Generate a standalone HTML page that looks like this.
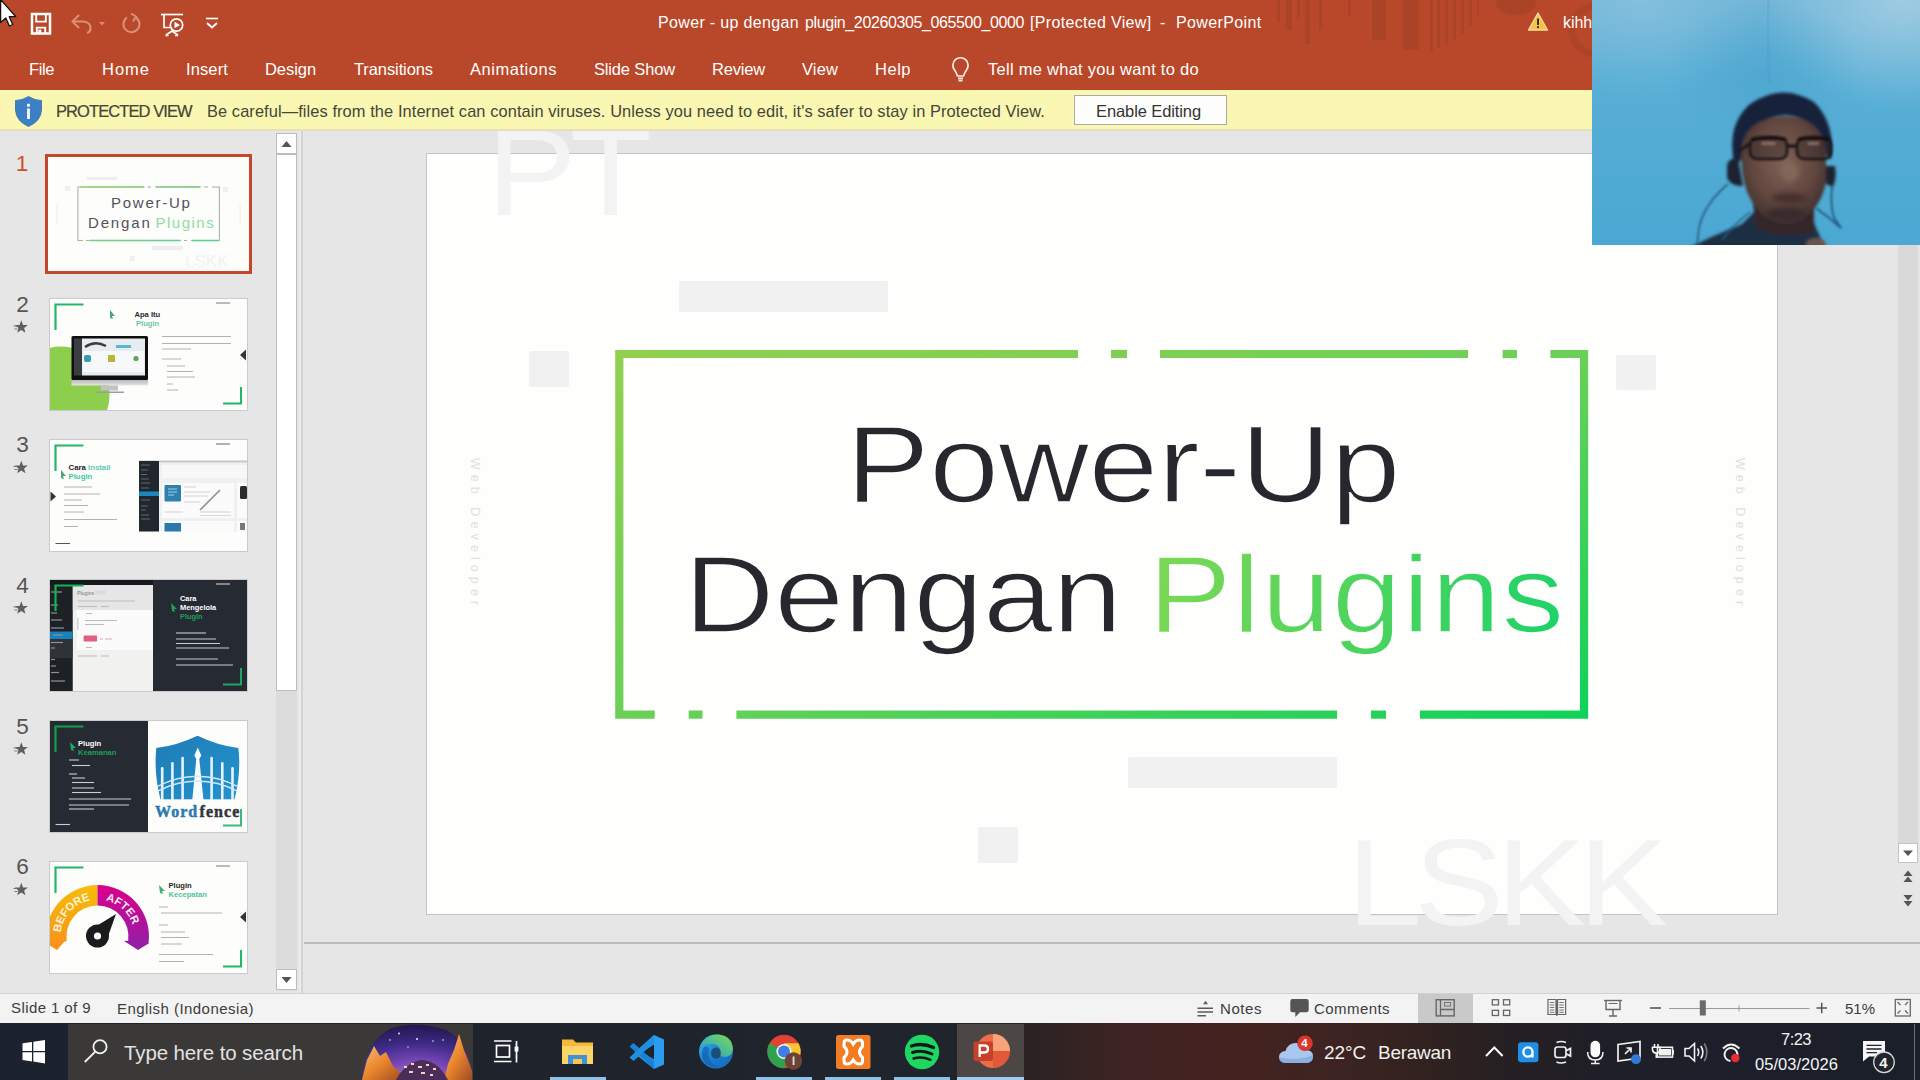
<!DOCTYPE html>
<html><head><meta charset="utf-8"><title>PowerPoint</title>
<style>
*{box-sizing:border-box;margin:0;padding:0}
html,body{width:1920px;height:1080px;overflow:hidden;background:#e6e6e6;font-family:"Liberation Sans",sans-serif;}
.abs{position:absolute}
.t{position:absolute;white-space:pre;line-height:1;}
#titlebar{left:0;top:0;width:1920px;height:90px;background:#b9482a}
#pv{left:0;top:90px;width:1920px;height:41px;background:#f9f7b2;border-bottom:2px solid #e3e2b4}
#left{left:0;top:131px;width:303px;height:862px;background:#e6e6e6}
#edit{left:303px;top:131px;width:1617px;height:862px;background:#e5e6e5}
#slide{left:427px;top:154px;width:1350px;height:760px;background:#fefefd;box-shadow:0 0 0 1px #c4c4c4}
#status{left:0;top:993px;width:1920px;height:30px;background:#f3f3f3;border-top:1px solid #d2d2d2}
#taskbar{left:0;top:1023px;width:1920px;height:57px;background:#1d1f26}
.thumb{position:absolute;left:50px;width:197px;height:111px;background:#fdfdfc;box-shadow:0 0 0 1px #cdcdcd;overflow:hidden}
</style></head><body>
<!-- ===== TITLE BAR ===== -->
<div id="titlebar" class="abs"></div>
<svg class="abs" style="left:0;top:0" width="1920" height="90" viewBox="0 0 1920 90">
<!-- decorative title pattern -->
<defs><filter id="tbb"><feGaussianBlur stdDeviation="0.7"/></filter></defs>
<g fill="#9f3f28" opacity="0.5" filter="url(#tbb)">
<rect x="1277" y="0" width="3" height="22"/><rect x="1286" y="0" width="6" height="30"/><rect x="1297" y="0" width="3" height="18"/>
<rect x="1305" y="0" width="5" height="44"/><rect x="1319" y="0" width="3" height="30"/><rect x="1348" y="0" width="3" height="16"/>
<rect x="1372" y="0" width="14" height="40"/><rect x="1403" y="0" width="16" height="50"/>
<rect x="1430" y="0" width="3" height="52"/><rect x="1437" y="0" width="3" height="48"/><rect x="1445" y="0" width="3" height="44"/><rect x="1453" y="0" width="3" height="40"/><rect x="1461" y="0" width="3" height="34"/><rect x="1469" y="0" width="3" height="26"/><rect x="1477" y="0" width="2" height="16"/>
<ellipse cx="1516" cy="4" rx="20" ry="11"/>
</g>
<circle cx="1596" cy="30" r="24" fill="none" stroke="#a5432a" stroke-width="7" opacity="0.6"/>
<!-- save -->
<g fill="none" stroke="#ffffff">
<path d="M32 13.9 H50 V33.5 H32 Z" stroke-width="2.5"/><path d="M36.2 14 V21.6 H45.8 V14" stroke-width="1.9"/><path d="M36.8 33.4 V27.6 H45.2 V33.4" stroke-width="1.9"/>
</g>
<rect x="38.3" y="29.6" width="3" height="3.8" fill="#fff"/>
<!-- undo (dim) -->
<g fill="none" stroke="#e7a892" stroke-width="2" opacity="0.75">
<path d="M79 15 L72.5 21.5 L79 28"/><path d="M73 21.5 H83 Q91 22 90.5 29 Q90 32 87 33"/>
</g>
<polygon points="99,22 105,22 102,25.5" fill="#e7a892" opacity="0.7"/>
<!-- redo (dim) -->
<g fill="none" stroke="#e7a892" stroke-width="2" opacity="0.75">
<path d="M127 17.5 A8 8 0 1 0 135 17"/><path d="M131 13.5 L136 16.5 L133 21.5"/>
</g>
<!-- present from start -->
<g fill="none" stroke="#ffffff" stroke-width="1.7">
<path d="M161 14.5 H183"/><path d="M164 15 V27.5 H170"/><circle cx="176.5" cy="25" r="6.2"/><path d="M166 35 L172 31 L178 35"/><path d="M165.5 35.5 h3 M175 35.5 h3"/>
</g>
<polygon points="174.5,21.8 174.5,28.2 180,25" fill="#fff"/>
<!-- customize dropdown -->
<path d="M206 18.5 H218" stroke="#fff" stroke-width="1.6"/><path d="M207 23 L212 27.5 L217 23" stroke="#fff" stroke-width="1.8" fill="none"/>
<!-- bulb -->
<g fill="none" stroke="#fdeee8" stroke-width="1.7">
<path d="M957.5 76 Q956.5 72.5 954.5 70 A7.6 7.6 0 1 1 966.5 70 Q964.5 72.5 963.5 76 Z"/><path d="M958 78.3 H963 M958.5 80.6 H962.5"/>
</g>
<!-- warning -->
<polygon points="1538,13 1547.5,30 1528.5,30" fill="#f6c24b" stroke="#f9dc9a" stroke-width="1.3" stroke-linejoin="round"/>
<rect x="1537.1" y="18.5" width="1.9" height="6.5" fill="#3a2a12"/><rect x="1537.1" y="26.2" width="1.9" height="2" fill="#3a2a12"/>
</svg>

<span class="t" style="left:658.0px;top:14.5px;font-size:16px;color:#fff;letter-spacing:0.34px;">Power - up dengan</span>
<span class="t" style="left:805.0px;top:14.5px;font-size:16px;color:#fff;letter-spacing:-0.39px;">plugin_20260305_065500_0000</span>
<span class="t" style="left:1030.0px;top:14.5px;font-size:16px;color:#fff;letter-spacing:0.33px;">[Protected View]</span>
<span class="t" style="left:1160.0px;top:14.5px;font-size:16px;color:#fff;letter-spacing:0.67px;">-</span>
<span class="t" style="left:1176.0px;top:14.5px;font-size:16px;color:#fff;letter-spacing:0.37px;">PowerPoint</span>
<span class="t" style="left:1563.0px;top:14.5px;font-size:16px;color:#fff;letter-spacing:-0.05px;">kihhh</span>
<span class="t" style="left:29.0px;top:60.8px;font-size:16.5px;color:#fff;letter-spacing:-0.40px;">File</span>
<span class="t" style="left:102.0px;top:60.8px;font-size:16.5px;color:#fff;letter-spacing:1.00px;">Home</span>
<span class="t" style="left:186.0px;top:60.8px;font-size:16.5px;color:#fff;letter-spacing:0.12px;">Insert</span>
<span class="t" style="left:265.0px;top:60.8px;font-size:16.5px;color:#fff;letter-spacing:-0.06px;">Design</span>
<span class="t" style="left:354.0px;top:60.8px;font-size:16.5px;color:#fff;letter-spacing:-0.10px;">Transitions</span>
<span class="t" style="left:470.0px;top:60.8px;font-size:16.5px;color:#fff;letter-spacing:0.54px;">Animations</span>
<span class="t" style="left:594.0px;top:60.8px;font-size:16.5px;color:#fff;letter-spacing:-0.16px;">Slide Show</span>
<span class="t" style="left:712.0px;top:60.8px;font-size:16.5px;color:#fff;letter-spacing:-0.18px;">Review</span>
<span class="t" style="left:802.0px;top:60.8px;font-size:16.5px;color:#fff;letter-spacing:0.13px;">View</span>
<span class="t" style="left:875.0px;top:60.8px;font-size:16.5px;color:#fff;letter-spacing:0.52px;">Help</span>
<span class="t" style="left:988.0px;top:60.8px;font-size:16.5px;color:#fff;letter-spacing:0.27px;">Tell me what you want to do</span>
<!-- ===== EDIT AREA ===== -->
<div id="edit" class="abs"></div>
<div id="slide" class="abs"></div>
<!-- placeholder grey blocks -->
<div class="abs" style="left:679px;top:281px;width:209px;height:31px;background:#f1f1f2;border-radius:2px"></div>
<div class="abs" style="left:529px;top:351px;width:40px;height:36px;background:#f1f1f2;border-radius:2px"></div>
<div class="abs" style="left:1616px;top:355px;width:40px;height:35px;background:#f1f1f2;border-radius:2px"></div>
<div class="abs" style="left:1128px;top:757px;width:209px;height:31px;background:#f1f1f2;border-radius:2px"></div>
<div class="abs" style="left:978px;top:827px;width:40px;height:36px;background:#f1f1f2;border-radius:2px"></div>
<!-- green frame -->
<svg class="abs" style="left:605px;top:339px" width="1000" height="400" viewBox="605 339 1000 400">
<defs><linearGradient id="fg" gradientUnits="userSpaceOnUse" x1="0" y1="0" x2="1" y2="1" gradientTransform="translate(615 350) scale(973 369)">
<stop offset="0" stop-color="#92d050"/><stop offset="0.5" stop-color="#6bd058"/><stop offset="1" stop-color="#0fd25a"/></linearGradient></defs>
<g fill="none" stroke="url(#fg)" stroke-width="8.2">
<path d="M1078 354 H619.3 V714.6 H654.7"/>
<path d="M1111 354 H1127"/>
<path d="M1160 354 H1468"/>
<path d="M1502.6 354 H1517"/>
<path d="M1550.4 354 H1584.1 V714.6 H1420"/>
<path d="M1371 714.6 H1386"/>
<path d="M736.4 714.6 H1337"/>
<path d="M688.7 714.6 H702.5"/>
</g></svg>
<!-- right scrollbar + notes separator -->
<div class="abs" style="left:1898px;top:131px;width:20px;height:712px;background:#d9d9d9"></div>
<div class="abs" style="left:1898px;top:843px;width:20px;height:20px;background:#fefefe;border:1px solid #c3c3c3"></div>
<svg class="abs" style="left:1896px;top:840px" width="24" height="72" viewBox="1896 840 24 72" fill="#555">
<polygon points="1903,850.5 1913,850.5 1908,856"/>
<polygon points="1903.5,876 1912.5,876 1908,870.5"/><polygon points="1903.5,882 1912.5,882 1908,876.5"/>
<polygon points="1903.5,895 1912.5,895 1908,900.5"/><polygon points="1903.5,901 1912.5,901 1908,906.5"/>
</svg>
<div class="abs" style="left:304px;top:942px;width:1616px;height:1.5px;background:#bcbcbc"></div>
<span class="t" style="left:481px;top:458px;font-size:12.5px;color:#e0e0e0;letter-spacing:5.1px;transform:rotate(90deg);transform-origin:0 0">Web Developer</span>
<span class="t" style="left:1746px;top:458px;font-size:12.5px;color:#e0e0e0;letter-spacing:5.1px;transform:rotate(90deg);transform-origin:0 0">Web Developer</span>
<svg class="abs" style="left:1148px;top:520px;overflow:visible" width="440" height="170" viewBox="0 0 440 170">
<defs><linearGradient id="pg" gradientUnits="userSpaceOnUse" x1="0" y1="40" x2="360" y2="110"><stop offset="0" stop-color="#7ed857"/><stop offset="0.5" stop-color="#50d45d"/><stop offset="1" stop-color="#1fd268"/></linearGradient></defs>
<text x="0" y="111.7" transform="scale(1.14 1)" font-family="Liberation Sans" font-size="110" letter-spacing="0.72" fill="url(#pg)" stroke="#fefefd" stroke-width="1.7">Plugins</text>
</svg>

<span class="t" style="left:487.0px;top:111.5px;font-size:122px;color:#f3f3f3;letter-spacing:-6.13px;transform:scaleX(1.1);transform-origin:0 50%;">PT</span>
<span class="t" style="left:1347.0px;top:822.3px;font-size:122px;color:#f3f3f3;letter-spacing:-6.63px;transform:scaleX(1.1);transform-origin:0 50%;">LSKK</span>
<span class="t" style="left:846.0px;top:408.6px;font-size:110px;color:#26282e;letter-spacing:-0.39px;transform:scaleX(1.14);transform-origin:0 50%;-webkit-text-stroke:1.7px #fefefd;">Power-Up</span>
<span class="t" style="left:684.0px;top:538.6px;font-size:110px;color:#26282e;letter-spacing:-0.19px;transform:scaleX(1.14);transform-origin:0 50%;-webkit-text-stroke:1.7px #fefefd;">Dengan</span>
<!-- ===== PROTECTED VIEW ===== -->
<div id="pv" class="abs"></div>
<div class="abs" style="left:1074px;top:95px;width:153px;height:30px;background:#fdfdfb;border:1px solid #ababab"></div>
<svg class="abs" style="left:10px;top:92px" width="40" height="38" viewBox="10 92 40 38">
<path d="M28.5 96.5 Q22 100.5 15.5 100.5 V110 Q16 121 28.5 126.5 Q41 121 41.5 110 V100.5 Q35 100.5 28.5 96.5 Z" fill="#3c7fc6" stroke="#2f6cb0" stroke-width="0.8"/>
<rect x="27.1" y="108.5" width="2.8" height="10.5" fill="#fff"/><rect x="27.1" y="103.8" width="2.8" height="2.9" fill="#fff"/>
</svg>

<span class="t" style="left:56.0px;top:102.8px;font-size:16.5px;color:#454538;letter-spacing:-0.91px;-webkit-text-stroke:0.22px #454538;">PROTECTED VIEW</span>
<span class="t" style="left:207.0px;top:102.8px;font-size:16.4px;color:#45453a;letter-spacing:0.09px;">Be careful—files from the Internet can contain viruses. Unless you need to edit, it's safer to stay in Protected View.</span>
<span class="t" style="left:1096.0px;top:102.8px;font-size:16.5px;color:#333;letter-spacing:-0.10px;">Enable Editing</span>
<!-- ===== LEFT PANEL ===== -->
<div id="left" class="abs"></div>
<div class="abs" style="left:276px;top:133px;width:21px;height:858px;background:#dcdcdc"></div>
<div class="abs" style="left:276px;top:154px;width:21px;height:537px;background:#fefefe;border:1px solid #bdbdbd"></div>
<div class="abs" style="left:276px;top:133px;width:21px;height:21px;background:#fefefe;border:1px solid #bdbdbd"></div>
<div class="abs" style="left:276px;top:969px;width:21px;height:21px;background:#fefefe;border:1px solid #bdbdbd"></div>
<svg class="abs" style="left:276px;top:133px" width="21" height="858"><polygon points="5.5,14 15.5,14 10.5,8" fill="#555"/><polygon points="5.5,844 15.5,844 10.5,850" fill="#555"/></svg>
<div class="abs" style="left:301px;top:131px;width:2px;height:862px;background:#d3d3d3"></div>
<div class="abs" style="left:299px;top:131px;width:2px;height:862px;background:#ececec"></div>
<span class="t" style="left:10px;top:153.4px;width:24px;text-align:center;font-size:22.6px;color:#cf4f2c">1</span>
<span class="t" style="left:10.5px;top:293.7px;width:24px;text-align:center;font-size:22.6px;color:#555555">2</span>
<span class="t" style="left:10.5px;top:434.2px;width:24px;text-align:center;font-size:22.6px;color:#555555">3</span>
<span class="t" style="left:10.5px;top:574.7px;width:24px;text-align:center;font-size:22.6px;color:#555555">4</span>
<span class="t" style="left:10.5px;top:715.7px;width:24px;text-align:center;font-size:22.6px;color:#555555">5</span>
<span class="t" style="left:10.5px;top:856.2px;width:24px;text-align:center;font-size:22.6px;color:#555555">6</span>
<svg class="abs" style="left:0;top:131px" width="50" height="862" viewBox="0 131 50 862"><polygon points="21.3,320.3 23.0,324.9 27.9,325.1 24.1,328.1 25.4,332.8 21.3,330.1 17.2,332.8 18.5,328.1 14.7,325.1 19.6,324.9" fill="#5f5f5f"/><path d="M17.0 326.0 h-3.5 M17.5 329.0 h-3" stroke="#777" stroke-width="1.1"/><polygon points="21.3,460.8 23.0,465.4 27.9,465.6 24.1,468.6 25.4,473.3 21.3,470.6 17.2,473.3 18.5,468.6 14.7,465.6 19.6,465.4" fill="#5f5f5f"/><path d="M17.0 466.5 h-3.5 M17.5 469.5 h-3" stroke="#777" stroke-width="1.1"/><polygon points="21.3,601.3 23.0,605.9 27.9,606.1 24.1,609.1 25.4,613.8 21.3,611.1 17.2,613.8 18.5,609.1 14.7,606.1 19.6,605.9" fill="#5f5f5f"/><path d="M17.0 607.0 h-3.5 M17.5 610.0 h-3" stroke="#777" stroke-width="1.1"/><polygon points="21.3,742.3 23.0,746.9 27.9,747.1 24.1,750.1 25.4,754.8 21.3,752.1 17.2,754.8 18.5,750.1 14.7,747.1 19.6,746.9" fill="#5f5f5f"/><path d="M17.0 748.0 h-3.5 M17.5 751.0 h-3" stroke="#777" stroke-width="1.1"/><polygon points="21.3,882.8 23.0,887.4 27.9,887.6 24.1,890.6 25.4,895.3 21.3,892.6 17.2,895.3 18.5,890.6 14.7,887.6 19.6,887.4" fill="#5f5f5f"/><path d="M17.0 888.5 h-3.5 M17.5 891.5 h-3" stroke="#777" stroke-width="1.1"/></svg>
<div class="abs" style="left:45px;top:153.5px;width:207px;height:120.5px;border:3.5px solid #c3482b;background:#fdfdfc"></div>
<svg class="abs" style="left:50px;top:158px;background:#fdfdfc;" width="197" height="111" viewBox="0 0 197 111" font-family="Liberation Sans"><defs><linearGradient id="g1" x1="0" x2="1" y1="0" y2="1"><stop offset="0" stop-color="#9ed27a"/><stop offset="1" stop-color="#55d28e"/></linearGradient></defs><rect x="27.9" y="29" width="141.5" height="53.5" fill="none" stroke="#a9b7a6" stroke-width="1.1"/><path d="M30 29 H94 M106 29 H150 M40 82.5 H130 M142 82.5 H168" stroke="url(#g1)" stroke-width="1.4"/><path d="M94.5 29 h3 M101 29 h4 M151 29 h3 M158 29 h4 M33 82.5 h3 M131 82.5 h3 M137 82.5 h4" stroke="#fdfdfc" stroke-width="2"/><text x="61" y="49.8" font-family="Liberation Sans" font-size="15" font-weight="400" fill="#50525a" letter-spacing="1.75" >Power-Up</text><text x="38" y="69.8" font-family="Liberation Sans" font-size="15" font-weight="400" fill="#50525a" letter-spacing="1.85" >Dengan</text><text x="105.5" y="69.8" font-family="Liberation Sans" font-size="15" font-weight="400" fill="#8fdc9c" letter-spacing="1.5" >Plugins</text><rect x="37" y="19" width="30" height="3" fill="#eeeeee"/><rect x="102" y="88" width="31" height="4" fill="#eeeeee"/><rect x="15" y="28" width="5" height="5" fill="#f0f0f0"/><rect x="173" y="29" width="5" height="5" fill="#f0f0f0"/><rect x="80" y="98" width="5" height="5" fill="#f0f0f0"/><path d="M7 45 V66 M190 45 V66" stroke="#eeeeee" stroke-width="1"/><text x="135" y="109" font-family="Liberation Sans" font-size="17" font-weight="400" fill="#f2f2f2" letter-spacing="0" >LSKK</text></svg>
<svg class="abs" style="left:50px;top:299px;background:#fdfdfc;box-shadow:0 0 0 1px #cbcbcb;" width="197" height="111" viewBox="0 0 197 111" font-family="Liberation Sans"><circle cx="11" cy="96" r="48.5" fill="#8dcf4c"/><path d="M5.5 31 V5.5 H33.5" fill="none" stroke="#22b868" stroke-width="2.2"/><path d="M173 104.5 H191 V88" fill="none" stroke="#22b868" stroke-width="2"/><rect x="21.5" y="37" width="76.5" height="44" rx="1.5" fill="#0f0f10"/><rect x="24" y="39.5" width="8" height="37" fill="#3a3d42"/><rect x="32" y="39.5" width="63" height="37" fill="#e6ecef"/><rect x="33" y="52" width="61" height="21" fill="#f6f8f9"/><path d="M35 48 Q45 41 56 47" stroke="#3c3c3c" stroke-width="2.4" fill="none"/><rect x="66" y="46" width="15" height="3" fill="#5fb4d0"/><rect x="34" y="56" width="7" height="7" rx="2" fill="#3a9bb7"/><rect x="58" y="56" width="7" height="7" fill="#b9b53a"/><circle cx="86" cy="59.5" r="2.6" fill="#5ea35a"/><defs><linearGradient id="st" x1="0" x2="0" y1="0" y2="1"><stop offset="0" stop-color="#b9b9b9"/><stop offset="1" stop-color="#e4e4e4"/></linearGradient></defs><rect x="21.5" y="81" width="76.5" height="5.5" fill="url(#st)"/><rect x="51" y="86.5" width="17" height="5" fill="#c2c2c2"/><rect x="46" y="92.5" width="28" height="1.5" fill="#9c9c9c"/><text x="84.5" y="17.5" font-family="Liberation Sans" font-size="7.6" font-weight="700" fill="#2a2a33" letter-spacing="0" >Apa Itu</text><text x="86" y="26.5" font-family="Liberation Sans" font-size="7.6" font-weight="700" fill="#6cc9a0" letter-spacing="0" >Plugin</text><path d="M60 11 l5 6 l-3 0 l1 3 l-3 -1 z" fill="#4aa57a"/><path d="M112 37.5 H181" stroke="#b2b2b2" stroke-width="1" opacity="1"/><path d="M112 44.5 H181" stroke="#b2b2b2" stroke-width="1" opacity="1"/><path d="M112 50 H141" stroke="#b2b2b2" stroke-width="1" opacity="1"/><path d="M112 60 H131" stroke="#b2b2b2" stroke-width="1" opacity="1"/><path d="M117 67 H135" stroke="#b2b2b2" stroke-width="1" opacity="1"/><path d="M117 72.5 H143" stroke="#b2b2b2" stroke-width="1" opacity="1"/><path d="M117 78 H145" stroke="#b2b2b2" stroke-width="1" opacity="1"/><path d="M117 85 H123" stroke="#b2b2b2" stroke-width="1" opacity="1"/><path d="M117 91 H128" stroke="#b2b2b2" stroke-width="1" opacity="1"/><polygon points="190,56 196,50.5 196,61.5" fill="#333"/><path d="M166 4 H180" stroke="#777" stroke-width="1" opacity="1"/></svg>
<svg class="abs" style="left:50px;top:439.5px;background:#fdfdfc;box-shadow:0 0 0 1px #cbcbcb;" width="197" height="111" viewBox="0 0 197 111" font-family="Liberation Sans"><path d="M5.5 31 V5.5 H33.5" fill="none" stroke="#22b868" stroke-width="2.2"/><text x="18.5" y="29.5" font-family="Liberation Sans" font-size="7.8" font-weight="700" fill="#1e2027" letter-spacing="0" >Cara</text><text x="38" y="29.5" font-family="Liberation Sans" font-size="7.8" font-weight="700" fill="#63c8b0" letter-spacing="0" >Install</text><text x="18.5" y="38.5" font-family="Liberation Sans" font-size="7.8" font-weight="700" fill="#3fc9a0" letter-spacing="0" >Plugin</text><path d="M11 30 l5 6 l-3 0 l1 3 l-3 -1 z" fill="#4aa57a"/><path d="M14 47 H42" stroke="#b2b2b2" stroke-width="1" opacity="1"/><path d="M14 54 H50" stroke="#b2b2b2" stroke-width="1" opacity="1"/><path d="M14 60 H32" stroke="#b2b2b2" stroke-width="1" opacity="1"/><path d="M14 65.5 H38" stroke="#b2b2b2" stroke-width="1" opacity="1"/><path d="M14 72 H34" stroke="#b2b2b2" stroke-width="1" opacity="1"/><path d="M14 79.5 H67" stroke="#b2b2b2" stroke-width="1" opacity="1"/><path d="M14 86.5 H28" stroke="#b2b2b2" stroke-width="1" opacity="1"/><polygon points="0.5,51.5 6,56.5 0.5,61.5" fill="#333"/><rect x="89" y="20.5" width="108" height="71" fill="#eef0f1"/><rect x="89" y="20.5" width="108" height="2" fill="#c9c9c9"/><rect x="89" y="21" width="20" height="70.5" fill="#22272d"/><rect x="89" y="51.5" width="20" height="4.5" fill="#1b86bf"/><path d="M91 25 H100" stroke="#5d6a73" stroke-width="1" opacity="1"/><path d="M91 30 H98" stroke="#5d6a73" stroke-width="1" opacity="1"/><path d="M91 34.5 H97" stroke="#5d6a73" stroke-width="1" opacity="1"/><path d="M91 39 H99" stroke="#5d6a73" stroke-width="1" opacity="1"/><path d="M91 43 H100" stroke="#5d6a73" stroke-width="1" opacity="1"/><path d="M91 48 H99" stroke="#5d6a73" stroke-width="1" opacity="1"/><path d="M91 60 H100" stroke="#5d6a73" stroke-width="1" opacity="1"/><path d="M91 66 H98" stroke="#5d6a73" stroke-width="1" opacity="1"/><path d="M91 70 H96" stroke="#5d6a73" stroke-width="1" opacity="1"/><path d="M91 75 H99" stroke="#5d6a73" stroke-width="1" opacity="1"/><path d="M91 79 H100" stroke="#5d6a73" stroke-width="1" opacity="1"/><rect x="112" y="25" width="85" height="13" fill="#f8f8f8"/><rect x="112" y="43" width="72" height="35" fill="#fbfbfb"/><rect x="114.5" y="45" width="16.5" height="16.5" rx="1" fill="#2e80ae"/><path d="M118 49 h9 M118 52 h9 M118 55 h6" stroke="#9fd0e8" stroke-width="1"/><path d="M150 70 L170 50" stroke="#8c8c8c" stroke-width="1.6"/><path d="M134 47 H146" stroke="#d9d9d9" stroke-width="1.2" opacity="1"/><path d="M134 52 H160" stroke="#d9d9d9" stroke-width="1.2" opacity="1"/><path d="M134 56 H158" stroke="#d9d9d9" stroke-width="1.2" opacity="1"/><path d="M134 62 H150" stroke="#d9d9d9" stroke-width="1.2" opacity="1"/><path d="M115 72 H133" stroke="#d9d9d9" stroke-width="1.2" opacity="1"/><path d="M150 72 H181" stroke="#d9d9d9" stroke-width="1.2" opacity="1"/><path d="M150 75.5 H181" stroke="#d9d9d9" stroke-width="1.2" opacity="1"/><rect x="112" y="81" width="72" height="10.5" fill="#fbfbfb"/><rect x="114.5" y="83" width="16.5" height="8.5" fill="#2a78b0"/><rect x="187" y="43" width="10" height="35" fill="#fbfbfb"/><rect x="190" y="46" width="7" height="13" rx="1.5" fill="#2a2a2a"/><rect x="187" y="81" width="10" height="10.5" fill="#fbfbfb"/><rect x="190" y="83" width="5" height="7" fill="#777"/><path d="M5.5 103.5 H20" stroke="#555" stroke-width="1" opacity="1"/><path d="M166 4 H180" stroke="#666" stroke-width="1" opacity="1"/></svg>
<svg class="abs" style="left:50px;top:580px;background:#252a33;box-shadow:0 0 0 1px #cbcbcb;" width="197" height="111" viewBox="0 0 197 111" font-family="Liberation Sans"><rect x="0" y="0" width="197" height="111" fill="#252a33"/><rect x="22.5" y="5" width="80.5" height="106" fill="#f1f1f0"/><rect x="22.5" y="5" width="80.5" height="25" fill="#e6e6e6"/><rect x="27" y="30" width="76" height="40" fill="#fbfbfb"/><rect x="0" y="0" width="103" height="5" fill="#15181c"/><rect x="0" y="5" width="22.5" height="106" fill="#1d2126"/><rect x="0" y="51.5" width="22.5" height="7.5" fill="#1782bb"/><rect x="0" y="59" width="22.5" height="19" fill="#2f3237"/><path d="M1 12 H12" stroke="#8b949b" stroke-width="1.2" opacity="1"/><path d="M1 25 H8" stroke="#8b949b" stroke-width="1.2" opacity="1"/><path d="M1 33 H7" stroke="#8b949b" stroke-width="1.2" opacity="1"/><path d="M1 40 H12" stroke="#8b949b" stroke-width="1.2" opacity="1"/><path d="M1 48 H14" stroke="#8b949b" stroke-width="1.2" opacity="1"/><path d="M3 55 H13" stroke="#8b949b" stroke-width="1.2" opacity="1"/><path d="M1 62.5 H13" stroke="#8b949b" stroke-width="1.2" opacity="1"/><path d="M1 68 H5" stroke="#8b949b" stroke-width="1.2" opacity="1"/><path d="M1 79.5 H5" stroke="#8b949b" stroke-width="1.2" opacity="1"/><path d="M1 86 H6" stroke="#8b949b" stroke-width="1.2" opacity="1"/><path d="M1 92.5 H9" stroke="#8b949b" stroke-width="1.2" opacity="1"/><path d="M1 101 H15" stroke="#8b949b" stroke-width="1.2" opacity="1"/><text x="27" y="14.5" font-family="Liberation Sans" font-size="5.2" font-weight="400" fill="#777" letter-spacing="0" >Plugins</text><rect x="45" y="10.5" width="11" height="4" fill="#dcdcdc"/><path d="M28 21 H85" stroke="#bdbdbd" stroke-width="1.1" opacity="1"/><path d="M28 26.5 H47" stroke="#bdbdbd" stroke-width="1.1" opacity="1"/><path d="M51 26.5 H59" stroke="#bdbdbd" stroke-width="1.1" opacity="1"/><path d="M36 33.5 H42" stroke="#bdbdbd" stroke-width="1.1" opacity="1"/><path d="M35 40.5 H67" stroke="#bdbdbd" stroke-width="1.1" opacity="1"/><path d="M35 44.5 H54" stroke="#bdbdbd" stroke-width="1.1" opacity="1"/><path d="M28 76 H47" stroke="#bdbdbd" stroke-width="1.1" opacity="1"/><path d="M51 76 H59" stroke="#bdbdbd" stroke-width="1.1" opacity="1"/><path d="M36 67.5 H42" stroke="#bdbdbd" stroke-width="1.1" opacity="1"/><rect x="33.6" y="55.5" width="13.5" height="6" rx="1" fill="#e0607f"/><path d="M50 59 h3 M55 59 h7" stroke="#e9a3b2" stroke-width="1.2"/><rect x="27" y="38" width="1.5" height="12" fill="#c9d3da"/><path d="M5.5 31 V5.5 H33.5" fill="none" stroke="#12b455" stroke-width="2.2"/><text x="130" y="21" font-family="Liberation Sans" font-size="7.4" font-weight="700" fill="#ffffff" letter-spacing="0" >Cara</text><text x="130" y="30" font-family="Liberation Sans" font-size="7.4" font-weight="700" fill="#ffffff" letter-spacing="0" >Mengelola</text><text x="130" y="39" font-family="Liberation Sans" font-size="7.4" font-weight="700" fill="#1f9e57" letter-spacing="0" >Plugin</text><path d="M121 23 l6 6 l-3 0 l1 3 l-3 -1 z" fill="#1fa35a"/><path d="M126 53 H156" stroke="#c7ccd3" stroke-width="1.1" opacity="1"/><path d="M126 59 H166" stroke="#c7ccd3" stroke-width="1.1" opacity="1"/><path d="M126 63.5 H170" stroke="#c7ccd3" stroke-width="1.1" opacity="1"/><path d="M126 68 H179" stroke="#c7ccd3" stroke-width="1.1" opacity="1"/><path d="M126 79 H168" stroke="#c7ccd3" stroke-width="1.1" opacity="1"/><path d="M126 85 H183" stroke="#c7ccd3" stroke-width="1.1" opacity="1"/><path d="M173 104.5 H191 V88" fill="none" stroke="#1fa862" stroke-width="2"/><path d="M166 4 H180" stroke="#e0e0e0" stroke-width="1" opacity="1"/></svg>
<svg class="abs" style="left:50px;top:721px;background:#fdfdfc;box-shadow:0 0 0 1px #cbcbcb;" width="197" height="111" viewBox="0 0 197 111" font-family="Liberation Sans"><rect x="0" y="0" width="98" height="111" fill="#252a33"/><path d="M5.5 31 V5.5 H33.5" fill="none" stroke="#149f4d" stroke-width="2.2"/><text x="28" y="24.5" font-family="Liberation Sans" font-size="7.6" font-weight="700" fill="#ffffff" letter-spacing="0" >Plugin</text><text x="28" y="33.5" font-family="Liberation Sans" font-size="7.6" font-weight="700" fill="#1f9e57" letter-spacing="0" >Keamanan</text><path d="M20 21 l6 6 l-3 0 l1 3 l-3 -1 z" fill="#24a862"/><path d="M19 39 H29" stroke="#c9ced4" stroke-width="1.1" opacity="1"/><path d="M22 44.5 H40" stroke="#c9ced4" stroke-width="1.1" opacity="1"/><path d="M19 53 H27" stroke="#c9ced4" stroke-width="1.1" opacity="1"/><path d="M22 57 H35" stroke="#c9ced4" stroke-width="1.1" opacity="1"/><path d="M22 61.5 H44" stroke="#c9ced4" stroke-width="1.1" opacity="1"/><path d="M22 67 H44" stroke="#c9ced4" stroke-width="1.1" opacity="1"/><path d="M22 71.5 H51" stroke="#c9ced4" stroke-width="1.1" opacity="1"/><path d="M19 78 H81" stroke="#c9ced4" stroke-width="1.1" opacity="1"/><path d="M19 84 H79" stroke="#c9ced4" stroke-width="1.1" opacity="1"/><path d="M19 88 H44" stroke="#c9ced4" stroke-width="1.1" opacity="1"/><path d="M5.5 103.5 H20" stroke="#c9ced4" stroke-width="1.1" opacity="1"/><defs><linearGradient id="wf" x1="0" x2="1" y1="0" y2="1"><stop offset="0" stop-color="#1f7cb4"/><stop offset="1" stop-color="#2393d0"/></linearGradient></defs><path d="M106.3 27 Q127 24.5 147.6 14.7 Q168 24.5 188.4 27 Q191.3 52 184.5 78.6 H110.5 Q103.7 52 106.3 27 Z" fill="url(#wf)"/><rect x="110.9" y="46" width="2.6" height="33" rx="1.2" fill="#e6f3fb"/><rect x="121.10000000000001" y="41" width="2.6" height="38" rx="1.2" fill="#e6f3fb"/><rect x="131.29999999999998" y="35.7" width="2.6" height="43.3" rx="1.2" fill="#e6f3fb"/><rect x="160.29999999999998" y="35.7" width="2.6" height="43.3" rx="1.2" fill="#e6f3fb"/><rect x="171.0" y="41" width="2.6" height="38" rx="1.2" fill="#e6f3fb"/><rect x="181.2" y="46" width="2.6" height="33" rx="1.2" fill="#e6f3fb"/><path d="M142.3 79 L146.3 38 L144.3 34.5 L147.8 26.5 L151.3 34.5 L149.3 38 L153.5 79 Z" fill="#f6fbfe"/><path d="M107 65.7 Q147.6 45 188 65.7" stroke="#cfe8f7" stroke-width="1.5" fill="none"/><path d="M107.5 70.2 Q147.6 50 187.5 70.2" stroke="#cfe8f7" stroke-width="1.5" fill="none"/><rect x="100" y="78.6" width="95" height="3" fill="#fdfdfc"/><text x="105" y="95.5" font-family="Liberation Serif" font-size="16" font-weight="700" fill="#2b79ad" letter-spacing="1.05" stroke="#2b79ad" stroke-width="0.45">Word</text><text x="149.5" y="95.5" font-family="Liberation Serif" font-size="16" font-weight="700" fill="#30343a" letter-spacing="1.05" stroke="#30343a" stroke-width="0.45">fence</text><path d="M173 104.5 H191 V88" fill="none" stroke="#3fb87e" stroke-width="2"/></svg>
<svg class="abs" style="left:50px;top:861.5px;background:#fdfdfc;box-shadow:0 0 0 1px #cbcbcb;" width="197" height="111" viewBox="0 0 197 111" font-family="Liberation Sans"><defs><linearGradient id="gb" x1="0" x2="0" y1="0" y2="1"><stop offset="0" stop-color="#f7bd08"/><stop offset="1" stop-color="#f8901c"/></linearGradient><linearGradient id="ga" x1="0" x2="0" y1="0" y2="1"><stop offset="0" stop-color="#d9008b"/><stop offset="1" stop-color="#9020a6"/></linearGradient></defs><path d="M-3.5 81.7 A51.5 51.5 0 0 1 47.5 23.0 L47.5 43.5 A31 31 0 0 0 16.8 78.8 L14 80 L7 88 L-6 80 Z" fill="url(#gb)"/><path d="M47.5 23.0 A51.5 51.5 0 0 1 98.5 81.7 L101 80 L88 88 L74 79 L78.2 78.8 A31 31 0 0 0 47.5 43.5 Z" fill="url(#ga)"/><path id="pb" d="M10.6 72.6 A37 37 0 0 1 46.9 37.5" fill="none"/><path id="pa" d="M54.6 38.2 A37 37 0 0 1 84.5 73.2" fill="none"/><text font-size="11.2" font-weight="700" fill="#fff3dc" letter-spacing="0"><textPath href="#pb" startOffset="2">BEFORE</textPath></text><text font-size="11.2" font-weight="700" fill="#fdeaf7" letter-spacing="0.2"><textPath href="#pa" startOffset="1">AFTER</textPath></text><path d="M5.5 31 V5.5 H33.5" fill="none" stroke="#22b868" stroke-width="2.2"/><path d="M40 68 L66 52 L56 80 Z" fill="#1b1b1d"/><circle cx="47.5" cy="74" r="11.5" fill="#1b1b1d"/><circle cx="47.5" cy="74" r="3.6" fill="#fdfdfc"/><text x="118.5" y="25.8" font-family="Liberation Sans" font-size="7.6" font-weight="700" fill="#2b2520" letter-spacing="0" >Plugin</text><text x="118.5" y="34.5" font-family="Liberation Sans" font-size="7.6" font-weight="700" fill="#52c3a0" letter-spacing="0" >Kecepatan</text><path d="M109 23 l6 6 l-3 0 l1 3 l-3 -1 z" fill="#3fb06f"/><path d="M109 45 H118" stroke="#b2b2b2" stroke-width="1" opacity="1"/><path d="M111 51 H172" stroke="#b2b2b2" stroke-width="1" opacity="1"/><path d="M109 63 H118" stroke="#b2b2b2" stroke-width="1" opacity="1"/><path d="M111 70 H135" stroke="#b2b2b2" stroke-width="1" opacity="1"/><path d="M111 75.5 H139" stroke="#b2b2b2" stroke-width="1" opacity="1"/><path d="M111 82 H132" stroke="#b2b2b2" stroke-width="1" opacity="1"/><path d="M109 92.5 H163" stroke="#b2b2b2" stroke-width="1" opacity="1"/><path d="M109 99.5 H134" stroke="#b2b2b2" stroke-width="1" opacity="1"/><polygon points="190,55 196,49.5 196,60.5" fill="#333"/><path d="M173 104.5 H191 V88" fill="none" stroke="#22b868" stroke-width="2"/><path d="M166 4 H180" stroke="#777" stroke-width="1" opacity="1"/></svg>
<!-- ===== STATUS BAR ===== -->
<div id="status" class="abs"></div>
<div class="abs" style="left:1418px;top:994px;width:55px;height:29px;background:#c9c9c9"></div>
<svg class="abs" style="left:1180px;top:994px" width="740" height="29" viewBox="1180 994 740 29">
<g stroke="#5a5a5a" fill="none" stroke-width="1.5">
<!-- notes -->
<path d="M1197.5 1008.3 H1213 M1197.5 1012 H1213 M1197.5 1015.7 H1206"/>
<!-- normal view -->
<rect x="1436.2" y="999.7" width="18" height="16.2" stroke="#666" stroke-width="1.4"/><path d="M1440.5 1000 V1016 M1440.5 1009.5 H1454" stroke="#666" stroke-width="1.3"/><rect x="1444.5" y="1002.5" width="6" height="3.5" stroke="#777" stroke-width="1"/>
<!-- sorter -->
<g stroke="#666" stroke-width="1.3"><rect x="1492.3" y="999.7" width="6.2" height="5.2"/><rect x="1503.5" y="999.7" width="6.2" height="5.2"/><rect x="1492.3" y="1010.3" width="6.2" height="5.2"/><rect x="1503.5" y="1010.3" width="6.2" height="5.2"/></g>
<!-- reading view -->
<g stroke="#666" stroke-width="1.2"><path d="M1556.8 1000.5 V1016 M1548 999.5 H1556 V1014.5 H1548 Z M1557.6 999.5 H1565.6 V1014.5 H1557.6 Z"/><path d="M1549.8 1002.5 h4.5 M1549.8 1005 h4.5 M1549.8 1007.5 h4.5 M1549.8 1010 h4.5 M1549.8 1012.3 h4.5 M1559.3 1002.5 h4.5 M1559.3 1005 h4.5 M1559.3 1007.5 h4.5 M1559.3 1010 h4.5 M1559.3 1012.3 h4.5" stroke-width="0.9"/></g>
<!-- slideshow -->
<g stroke="#666" stroke-width="1.4"><path d="M1604 1000.5 H1622"/><path d="M1606 1001 V1009.5 H1620 V1001"/><path d="M1613 1009.5 V1015.5 M1609 1016 H1617"/><path d="M1608.5 1003.5 H1617.5" stroke-width="1"/></g>
<!-- zoom -->
<path d="M1650 1008 H1661" stroke="#555" stroke-width="1.6"/>
<path d="M1669 1008.5 H1809.5" stroke="#9a9a9a" stroke-width="1"/><path d="M1739 1005.5 V1011.5" stroke="#9a9a9a" stroke-width="1"/>
<path d="M1816.5 1008 H1827 M1821.7 1002.7 V1013.3" stroke="#555" stroke-width="1.5"/>
<!-- fit -->
<rect x="1895.3" y="999.5" width="15" height="16.5" stroke="#666" stroke-width="1.3"/>
<path d="M1897.5 1002 l3 3 M1908 1002 l-3 3 M1897.5 1013.5 l3 -3 M1908 1013.5 l-3 -3" stroke="#666" stroke-width="1.3"/>
</g>
<polygon points="1203,1004.3 1208,1004.3 1205.5,1000.8" fill="#5a5a5a"/>
<rect x="1699.8" y="1000.3" width="6" height="15.2" fill="#6a6a6a"/>
<!-- comments bubble -->
<path d="M1292.5 999 H1306.5 Q1308.7 999 1308.7 1001.2 V1010 Q1308.7 1012.2 1306.5 1012.2 H1300 L1295.3 1017 V1012.2 H1292.5 Q1290.3 1012.2 1290.3 1010 V1001.2 Q1290.3 999 1292.5 999 Z" fill="#555"/>
</svg>

<span class="t" style="left:11.0px;top:1000.0px;font-size:15px;color:#3c3c3c;letter-spacing:0.41px;">Slide 1 of 9</span>
<span class="t" style="left:117.0px;top:1000.5px;font-size:15px;color:#3c3c3c;letter-spacing:0.45px;">English (Indonesia)</span>
<span class="t" style="left:1220.0px;top:1000.5px;font-size:15px;color:#3c3c3c;letter-spacing:0.56px;">Notes</span>
<span class="t" style="left:1314.0px;top:1000.5px;font-size:15px;color:#3c3c3c;letter-spacing:0.43px;">Comments</span>
<span class="t" style="left:1845.0px;top:1000.5px;font-size:15px;color:#3c3c3c;letter-spacing:-0.01px;">51%</span>
<!-- ===== TASKBAR ===== -->
<div id="taskbar" class="abs" style="background:linear-gradient(90deg,#1b222f 0px,#1c222d 60px,#1e232c 480px,#20242c 950px,#2c2223 1030px,#3f2423 1130px,#44221f 1240px,#3d2422 1330px,#32221f 1420px,#241f24 1520px,#1d1f29 1640px,#1b1f2a 1920px)"></div>
<div class="abs" style="left:67.5px;top:1024px;width:405px;height:56px;background:#3a3938"></div>
<div class="abs" style="left:957px;top:1024px;width:67px;height:56px;background:#4c4744"></div>
<div class="abs" style="left:550px;top:1077px;width:56px;height:3px;background:#8fc3ec"></div>
<div class="abs" style="left:756px;top:1077px;width:56px;height:3px;background:#8fc3ec"></div>
<div class="abs" style="left:825px;top:1077px;width:56px;height:3px;background:#8fc3ec"></div>
<div class="abs" style="left:894px;top:1077px;width:56px;height:3px;background:#8fc3ec"></div>
<div class="abs" style="left:957px;top:1077px;width:67px;height:3px;background:#9ccdf2"></div>
<div class="abs" style="left:1913.5px;top:1024px;width:1px;height:56px;background:#6f727a"></div>
<svg class="abs" style="left:0;top:1023px" width="1920" height="57" viewBox="0 1023 1920 57">
<defs>
<radialGradient id="sky" cx="0.5" cy="1" r="0.95"><stop offset="0" stop-color="#c58fd8"/><stop offset="0.35" stop-color="#7a48b8"/><stop offset="0.7" stop-color="#3d2a86"/><stop offset="1" stop-color="#241a55"/></radialGradient>
<linearGradient id="rock" x1="0" x2="1" y1="0" y2="1"><stop offset="0" stop-color="#f9c06a"/><stop offset="0.5" stop-color="#e8842c"/><stop offset="1" stop-color="#9c4a22"/></linearGradient>
<linearGradient id="edge" x1="0" x2="1" y1="0" y2="1"><stop offset="0" stop-color="#35c1f1"/><stop offset="0.5" stop-color="#1b7fd4"/><stop offset="1" stop-color="#1565b8"/></linearGradient>
<linearGradient id="edge2" x1="0" x2="1" y1="1" y2="0"><stop offset="0" stop-color="#1e9ad6"/><stop offset="1" stop-color="#7ddc52"/></linearGradient>
<clipPath id="illc"><rect x="362" y="1024" width="110.5" height="56"/></clipPath>
</defs>
<!-- windows logo -->
<g fill="#ffffff"><polygon points="22.5,1043.2 32,1041.9 32,1051 22.5,1051"/><polygon points="33.3,1041.7 45,1040 45,1051 33.3,1051"/><polygon points="22.5,1052.3 32,1052.3 32,1061.4 22.5,1060.1"/><polygon points="33.3,1052.3 45,1052.3 45,1063.4 33.3,1061.6"/></g>
<!-- search icon -->
<circle cx="100" cy="1046.8" r="6.6" fill="none" stroke="#f2f2f2" stroke-width="1.8"/><path d="M95.3 1051.6 L84.8 1062" stroke="#f2f2f2" stroke-width="1.9"/>
<!-- illustration -->
<g clip-path="url(#illc)">
<path d="M362 1080 Q366 1040 392 1028 Q418 1020 446 1030 Q470 1042 472.5 1080 Z" fill="url(#sky)"/>
<g fill="#f6e9ff"><circle cx="399" cy="1033.5" r="0.9"/><circle cx="390" cy="1040" r="0.8"/><circle cx="417" cy="1039" r="1"/><circle cx="433" cy="1041" r="0.8"/><circle cx="443" cy="1040" r="0.8"/><circle cx="408" cy="1047" r="0.7"/></g>
<path d="M362 1080 L367 1060 L374 1046 L380 1056 L386 1052 L393 1066 L400 1072 L404 1080 Z" fill="url(#rock)"/>
<path d="M444 1080 L448 1064 L454 1050 L459 1034 L464 1050 L468 1060 L472.5 1072 L472.5 1080 Z" fill="url(#rock)"/>
<path d="M396 1080 Q404 1064 420 1060 Q438 1060 448 1080 Z" fill="#4a2d5a"/>
<g fill="#f6d7a8"><rect x="404" y="1066" width="3" height="2"/><rect x="411" y="1063" width="3" height="2"/><rect x="418" y="1066" width="4" height="2"/><rect x="426" y="1064" width="3" height="2"/><rect x="433" y="1068" width="3" height="2"/><rect x="409" y="1071" width="4" height="2"/><rect x="421" y="1072" width="4" height="2"/><rect x="430" y="1074" width="3" height="2"/></g>
</g>
<!-- task view -->
<g fill="none" stroke="#ffffff" stroke-width="1.7"><rect x="496.5" y="1045.5" width="13" height="11.5"/><path d="M494 1041 H511.5 M494 1061.5 H511.5"/><path d="M516.5 1041 V1062.5"/></g><rect x="514.6" y="1046.5" width="3.8" height="5" fill="#fff"/>
<!-- file explorer -->
<path d="M562 1039.5 H573 L576 1042.5 H593 V1064 H562 Z" fill="#f4b93a"/><path d="M562 1046 H593 V1064 H562 Z" fill="#fbd667"/><path d="M568 1055 H587 V1064 H568 Z" fill="#3f93d8"/><rect x="573" y="1059" width="9" height="5" fill="#f6c84f"/>
<!-- vscode -->
<path d="M654 1035 L664 1039.5 V1064.5 L654 1069 L634 1053 Z M654 1044.5 L642 1052 L654 1059.5 Z" fill="#2a9df0" fill-rule="evenodd"/><path d="M629.5 1046.5 L633.5 1043 L654 1061 L654 1069 Z" fill="#1782d6"/><path d="M629.5 1057.5 L633.5 1061 L654 1043 L654 1035 Z" fill="#1f8fe2"/>
<!-- edge -->
<circle cx="716" cy="1051.5" r="17" fill="url(#edge)"/><path d="M700 1047 Q705 1034.5 718 1034.5 Q732 1035.5 733 1049 Q732 1057 724 1057 Q718 1056 720 1051 Q720 1044 712 1044 Q704 1044 700 1047 Z" fill="url(#edge2)"/><path d="M709 1050 Q706 1062 718 1067 Q708 1068 703 1060 Q700 1053 704 1047 Q708 1045 709 1050 Z" fill="#135fa8" opacity="0.7"/><ellipse cx="716" cy="1053" rx="5" ry="5.5" fill="#1d2530" opacity="0.55"/>
<!-- chrome -->
<circle cx="784" cy="1051.5" r="16.7" fill="#e04335"/><path d="M784 1051.5 L769.6 1043.2 A16.7 16.7 0 0 0 784 1068.2 L792 1056 Z" fill="#2ea24e"/><path d="M784 1051.5 L792.3 1066 A16.7 16.7 0 0 0 798.4 1043.2 H784 Z" fill="#f7c32e"/><circle cx="784" cy="1051.5" r="7.6" fill="#f2f2f2"/><circle cx="784" cy="1051.5" r="6" fill="#3f7fe3"/>
<circle cx="793.5" cy="1061" r="8.7" fill="#6b4436"/><rect x="792.6" y="1056.5" width="1.9" height="8.5" fill="#e7d6cf"/>
<!-- xampp -->
<rect x="836" y="1035" width="34.5" height="34" rx="2.5" fill="#f37b21"/><path d="M844 1043 Q844 1040 847 1040 Q851 1040 853.2 1044 Q855.5 1040 859.5 1040 Q862.5 1040 862.5 1043 V1046.5 Q859.5 1049 859.5 1052 Q859.5 1055 862.5 1057.5 V1061 Q862.5 1064 859.5 1064 Q855.5 1064 853.2 1060 Q851 1064 847 1064 Q844 1064 844 1061 V1057.5 Q847 1055 847 1052 Q847 1049 844 1046.5 Z" fill="none" stroke="#fff" stroke-width="3"/>
<!-- spotify -->
<circle cx="922" cy="1052" r="17.2" fill="#1fd660"/><g fill="none" stroke="#15181c" stroke-linecap="round"><path d="M911.5 1046 Q922 1042.5 933.5 1047.5" stroke-width="3.4"/><path d="M912.5 1052.5 Q922 1049.5 932 1054" stroke-width="2.9"/><path d="M913.5 1058.5 Q922 1056 930.5 1059.8" stroke-width="2.4"/></g>
<!-- powerpoint -->
<circle cx="993" cy="1051" r="17" fill="#ee6c47"/><path d="M993 1034 A17 17 0 0 1 1010 1051 H993 Z" fill="#f8a37c"/><path d="M993 1051 H1010 A17 17 0 0 1 993 1068 Z" fill="#d94f2e" opacity="0.6"/><rect x="973.5" y="1041.5" width="19.5" height="19.5" rx="2" fill="#c8402a"/>
<path d="M979.7 1057 V1045.5 H984.3 Q988 1045.5 988 1049 Q988 1052.5 984.3 1052.5 H979.7" fill="none" stroke="#fff" stroke-width="2.3"/>
<!-- weather -->
<path d="M1286 1063 Q1279 1063 1279 1056.5 Q1279.5 1051.5 1285.5 1051 Q1288 1042.5 1297 1043 Q1304 1043.5 1306 1050 Q1313 1050 1313 1056.5 Q1313 1063 1306 1063 Z" fill="#a9c7ef"/><path d="M1286 1063 Q1279 1063 1279.2 1057 Q1296 1062 1313 1055 Q1313.5 1063 1306 1063 Z" fill="#7ba6e0" opacity="0.7"/>
<circle cx="1305" cy="1043.3" r="7.8" fill="#d9362e"/>
<!-- tray chevron -->
<path d="M1486 1056 L1494.3 1047.5 L1502.6 1056" fill="none" stroke="#fff" stroke-width="2"/>
<!-- blue app -->
<rect x="1518" y="1042.3" width="20.4" height="20" rx="3" fill="#1f8fe6"/><path d="M1532.5 1057.5 V1051.5 A4.6 4.6 0 1 0 1528 1056.6 Q1531 1056.6 1532.5 1054" fill="none" stroke="#fff" stroke-width="2.3"/>
<!-- meet now -->
<g fill="none" stroke="#f1f1f1" stroke-width="1.7"><rect x="1555" y="1047" width="11" height="10.5" rx="2.5"/><path d="M1566.5 1050.5 L1570.5 1048.5 V1056 L1566.5 1054"/><path d="M1556.5 1042.5 Q1561 1040.5 1566 1042.5 M1556.5 1062 Q1561 1064 1566 1062"/></g>
<!-- mic -->
<rect x="1590.5" y="1040.8" width="9.6" height="16.5" rx="4.8" fill="#fafafa"/><path d="M1587.6 1052 Q1587.6 1060 1595.3 1060 Q1603 1060 1603 1052 M1595.3 1060 V1063.5 M1591 1063.6 H1599.6" fill="none" stroke="#f1f1f1" stroke-width="1.5"/>
<!-- display -->
<g fill="none" stroke="#f1f1f1" stroke-width="1.7"><path d="M1618 1044.5 L1640 1041.5 V1058 L1618 1061 Z"/><path d="M1625 1054 L1631 1048 M1626.5 1048 H1631 V1052.5"/></g><circle cx="1636" cy="1059.3" r="5" fill="#3478d6"/>
<!-- battery/plug -->
<g fill="none" stroke="#f1f1f1" stroke-width="1.6"><rect x="1657.5" y="1047.3" width="15" height="9.8" /><path d="M1673.2 1050 V1054.5"/><path d="M1654.5 1044 V1047 M1658 1044 V1047 M1652.5 1047.3 H1660 V1050 Q1659.5 1053 1656.3 1053 Q1653 1053 1652.5 1050 Z M1656.3 1053 V1058"/></g><rect x="1659" y="1049" width="12" height="6.5" fill="#f1f1f1"/>
<!-- volume -->
<g fill="none" stroke="#f1f1f1" stroke-width="1.6"><path d="M1685 1048.5 H1689 L1694.5 1043.5 V1061 L1689 1056 H1685 Z"/><path d="M1697.5 1048.5 Q1700 1052.3 1697.5 1056"/><path d="M1700.8 1046 Q1705 1052.3 1700.8 1058.5"/><path d="M1704.3 1043.5 Q1709.5 1052.3 1704.3 1061" opacity="0.45"/></g>
<!-- wifi-ish -->
<g fill="none" stroke="#f1f1f1" stroke-width="2"><path d="M1723 1048.5 Q1731 1040.5 1739.5 1048.5"/><path d="M1737 1057 A6.5 6.5 0 1 0 1730.5 1061"/></g><circle cx="1735.3" cy="1058" r="4.2" fill="#ee2b35"/>
<!-- notifications -->
<path d="M1863 1041 H1885 V1056.5 H1869 L1863 1061.5 Z" fill="#f7f7f7"/><path d="M1866.5 1045.3 H1881.5 M1866.5 1049 H1881.5 M1866.5 1052.6 H1877" stroke="#20232c" stroke-width="1.3"/>
<circle cx="1884" cy="1062.3" r="10.3" fill="#22242d" stroke="#d8d8d8" stroke-width="1.3"/>
</svg>
<span class="t" style="left:1301.3px;top:1037.5px;font-size:11.5px;font-weight:700;color:#fff">4</span>
<span class="t" style="left:1879.3px;top:1054.8px;font-size:15px;font-weight:700;color:#f3f3f3">4</span>

<span class="t" style="left:124.0px;top:1042.8px;font-size:20.5px;color:#e2e2e2;letter-spacing:-0.12px;">Type here to search</span>
<span class="t" style="left:1324.0px;top:1043.0px;font-size:19px;color:#f0f0f0;letter-spacing:-0.11px;">22°C</span>
<span class="t" style="left:1378.0px;top:1043.0px;font-size:19px;color:#f0f0f0;letter-spacing:-0.29px;">Berawan</span>
<span class="t" style="left:1781.0px;top:1030.8px;font-size:16.5px;color:#f4f4f4;letter-spacing:-0.53px;">7:23</span>
<span class="t" style="left:1755.0px;top:1056.2px;font-size:16.5px;color:#f4f4f4;letter-spacing:0.04px;">05/03/2026</span>
<!-- ===== WEBCAM ===== -->
<svg class="abs" style="left:1592px;top:0" width="328" height="245" viewBox="1592 0 328 245">
<defs>
<linearGradient id="cbg" x1="0" y1="0" x2="0" y2="1"><stop offset="0" stop-color="#6fb5d7"/><stop offset="0.3" stop-color="#59afd6"/><stop offset="1" stop-color="#4aa8d2"/></linearGradient>
<radialGradient id="chl" cx="0.95" cy="0.0" r="0.45"><stop offset="0" stop-color="#a8cfe4" stop-opacity="0.85"/><stop offset="1" stop-color="#a8cfe4" stop-opacity="0"/></radialGradient>
<radialGradient id="chl2" cx="0.15" cy="0.0" r="0.4"><stop offset="0" stop-color="#93c6e0" stop-opacity="0.6"/><stop offset="1" stop-color="#93c6e0" stop-opacity="0"/></radialGradient>
<radialGradient id="cdk" cx="0.52" cy="0.3" r="0.3"><stop offset="0" stop-color="#3f9cc9" stop-opacity="0.35"/><stop offset="1" stop-color="#3f9cc9" stop-opacity="0"/></radialGradient>
<radialGradient id="cfa" cx="0.5" cy="0.42" r="0.62"><stop offset="0" stop-color="#806257"/><stop offset="0.6" stop-color="#62473f"/><stop offset="1" stop-color="#3b2d2d"/></radialGradient>
<filter id="cb" x="-5%" y="-5%" width="110%" height="110%"><feGaussianBlur stdDeviation="1.7"/></filter>
<filter id="cb2" x="-5%" y="-5%" width="110%" height="110%"><feGaussianBlur stdDeviation="1.0"/></filter>
<filter id="cb3" x="-20%" y="-20%" width="140%" height="140%"><feGaussianBlur stdDeviation="2.4"/></filter>
<clipPath id="cc"><rect x="1592" y="0" width="328" height="245"/></clipPath>
</defs>
<g clip-path="url(#cc)">
<rect x="1592" y="0" width="328" height="245" fill="url(#cbg)"/>
<rect x="1592" y="0" width="328" height="245" fill="url(#chl)"/>
<rect x="1592" y="0" width="328" height="245" fill="url(#chl2)"/>
<rect x="1592" y="0" width="328" height="245" fill="url(#cdk)"/>
<path d="M1768 0 Q1766 40 1770 85" stroke="#3f93c0" stroke-width="1.6" opacity="0.45" filter="url(#cb2)" fill="none"/>
<g filter="url(#cb)">
<!-- shirt -->
<path d="M1684 250 Q1712 236 1742 224 L1756 210 L1810 210 L1816 228 Q1822 240 1826 250 Z" fill="#1f2d42"/>
<!-- neck -->
<path d="M1752 196 L1814 196 L1814 232 Q1786 240 1756 228 Z" fill="#35282a"/>
<!-- hair -->
<path d="M1735 168 Q1725 126 1750 104 Q1782 82 1814 102 Q1836 124 1831 160 L1823 150 Q1816 117 1786 115 Q1752 117 1746 152 Z" fill="#14233a"/>
<!-- face -->
<path d="M1741 150 Q1744 119 1784 116 Q1821 117 1826 150 L1826 182 Q1820 214 1792 224 Q1762 224 1750 198 Q1741 182 1741 150 Z" fill="url(#cfa)"/>
<!-- ears/earphones -->
<path d="M1727 166 Q1728 157 1738 159 L1743 186 Q1732 187 1727 178 Z" fill="#1a2030"/>
<path d="M1826 166 L1835 166 Q1837 178 1833 187 L1826 184 Z" fill="#1a2030"/>
<!-- hand -->
<ellipse cx="1816" cy="244" rx="10" ry="6" fill="#6b5350"/>
</g>
<!-- soft facial shading -->
<g filter="url(#cb3)" opacity="0.75">
<ellipse cx="1790" cy="172" rx="9" ry="10" fill="#8a6a5f"/>
<ellipse cx="1789" cy="198" rx="17" ry="5" fill="#3a2826"/>
<ellipse cx="1786" cy="214" rx="20" ry="7" fill="#33262a"/>
</g>
<g filter="url(#cb2)">
<!-- glasses -->
<rect x="1750" y="138" width="37" height="21" rx="7" fill="#2e2022" fill-opacity="0.4" stroke="#1b1417" stroke-width="2.6"/>
<rect x="1797" y="138" width="34" height="21" rx="7" fill="#2e2022" fill-opacity="0.4" stroke="#1b1417" stroke-width="2.6"/>
<path d="M1752 139.5 Q1768 135.5 1786 139.5 M1798 139.5 Q1814 135.5 1830 139.5" stroke="#17110f" stroke-width="3.4" fill="none"/>
<path d="M1787 146 H1797 M1750 144 L1738 151" stroke="#1b1417" stroke-width="3"/>
<path d="M1762 143.5 h13 M1808 143.5 h11" stroke="#b09c8e" stroke-width="2.2" opacity="0.7"/>
<!-- cables -->
<path d="M1728 184 Q1704 204 1699 228 L1697 246" stroke="#2b5d86" stroke-width="1.7" fill="none"/>
<path d="M1750 212 Q1732 226 1722 240" stroke="#2b5d86" stroke-width="1.5" fill="none"/>
<path d="M1832 186 Q1830 206 1834 218 L1841 228" stroke="#26547c" stroke-width="1.7" fill="none"/>
<path d="M1816 208 Q1830 218 1841 228" stroke="#26547c" stroke-width="1.7" fill="none"/>
</g>
</g>
</svg>
<!-- ===== CURSOR ===== -->
<svg class="abs" style="left:0;top:0" width="24" height="32" viewBox="0 0 24 32"><path d="M0.6 -0.5 L0.6 22.6 L5.8 17.9 L9.4 26 L12.7 24.5 L9.3 16.7 L15.7 16.5 Z" fill="#ffffff" stroke="#1a1010" stroke-width="1.3" stroke-linejoin="round"/></svg>
</body></html>
